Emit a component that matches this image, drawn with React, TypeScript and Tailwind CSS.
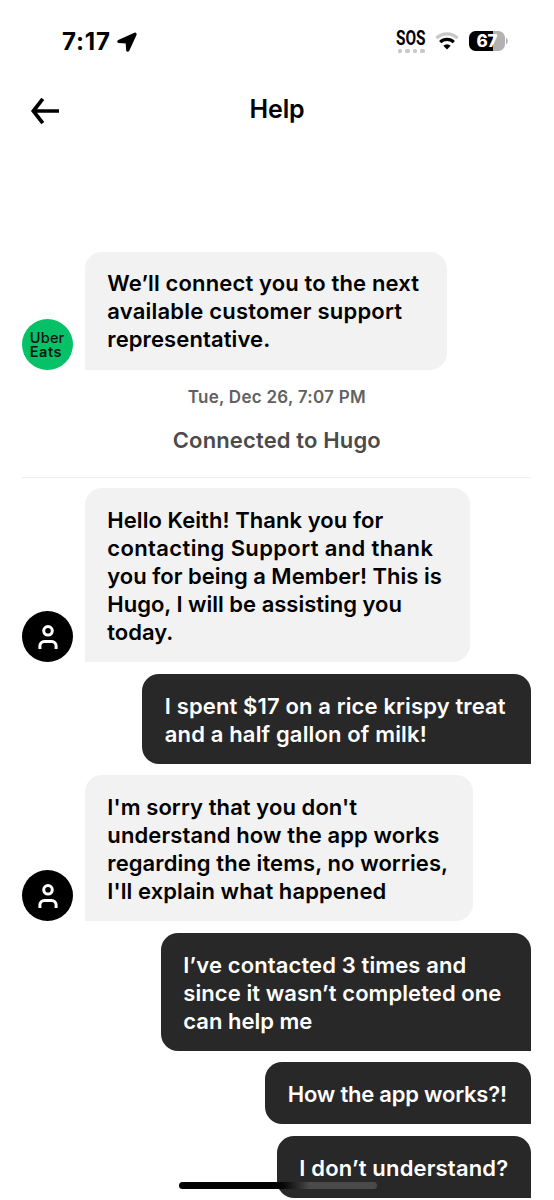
import clsx from 'clsx';

type Line = { text: string; className?: string };
type Message = { from: 'bot' | 'agent' | 'me'; width: string; lines: Line[] };

const intro: Message = {
    from: 'bot',
    width: 'w-[362px]',
    lines: [
        { text: 'We’ll connect you to the next', className: 'tracking-[0.15px]' },
        { text: 'available customer support', className: 'tracking-[0.21px]' },
        { text: 'representative.', className: 'tracking-[0.11px]' }
    ]
};

const messages: Message[] = [
    {
        from: 'agent',
        width: 'w-[385.5px]',
        lines: [
            { text: 'Hello Keith! Thank you for', className: 'tracking-[0.06px]' },
            { text: 'contacting Support and thank', className: 'tracking-[0.37px]' },
            { text: 'you for being a Member! This is' },
            { text: 'Hugo, I will be assisting you' },
            { text: 'today.' }
        ]
    },
    {
        from: 'me',
        width: 'w-[389px]',
        lines: [
            { text: 'I spent $17 on a rice krispy treat', className: 'tracking-[0.13px]' },
            { text: 'and a half gallon of milk!', className: 'tracking-[0.15px]' }
        ]
    },
    {
        from: 'agent',
        width: 'w-[388.5px]',
        lines: [
            { text: "I'm sorry that you don't", className: 'tracking-[0.08px]' },
            { text: 'understand how the app works', className: 'tracking-[0.11px]' },
            { text: 'regarding the items, no worries,', className: 'tracking-[0.09px]' },
            { text: "I'll explain what happened", className: 'tracking-[0.08px]' }
        ]
    },
    {
        from: 'me',
        width: 'w-[370.5px]',
        lines: [
            { text: 'I’ve contacted 3 times and', className: 'tracking-[0.12px]' },
            { text: 'since it wasn’t completed one', className: 'tracking-[0.07px]' },
            { text: 'can help me' }
        ]
    },
    {
        from: 'me',
        width: 'w-[266px]',
        lines: [{ text: 'How the app works?!', className: 'tracking-[-0.22px]' }]
    },
    {
        from: 'me',
        width: 'w-[254.5px]',
        lines: [{ text: 'I don’t understand?', className: 'tracking-[0.17px]' }]
    }
];

const UberEatsAvatar = () => (
    <div className="flex size-[51px] shrink-0 flex-col justify-center rounded-full bg-[#06c167] pl-[7.5px] text-[14.5px] leading-[14px] text-[#06150d]">
        <span className="font-medium tracking-[0.2px]">Uber</span>
        <span className="font-semibold tracking-[0.5px]">Eats</span>
    </div>
);

const AgentAvatar = () => (
    <div className="flex size-[51px] shrink-0 items-center justify-center rounded-full bg-black">
        <svg width="20" height="26" viewBox="0 0 20 26" fill="none" stroke="white" strokeWidth="3">
            <circle cx="10" cy="6.8" r="4.3" />
            <path d="M1.9 25v-3.2a4.4 4.4 0 0 1 4.400-4.400h7.400a4.4 4.4 0 0 1 4.400 4.400V25" />
        </svg>
    </div>
);

const MessageRow = ({ message }: { message: Message }) => {
    const mine = message.from === 'me';
    return (
        <div className={clsx('flex items-end', mine ? 'justify-end' : 'gap-[11.5px]')}>
            {message.from === 'bot' && <UberEatsAvatar />}
            {message.from === 'agent' && <AgentAvatar />}
            <div
                className={clsx(
                    'rounded-[17px] pl-[22.5px] text-[22px] leading-[28px] font-semibold whitespace-nowrap',
                    message.width,
                    message.from === 'bot' ? 'py-[17px]' : 'pt-[18px] pb-[16px]',
                    mine ? 'rounded-br-none bg-[#282828] text-white' : 'rounded-bl-none bg-[#f2f2f2] text-black'
                )}
            >
                {message.lines.map(line => (
                    <p key={line.text} className={line.className}>{line.text}</p>
                ))}
            </div>
        </div>
    );
};

const StatusBar = () => (
    <div className="flex h-[82px] items-center justify-between pr-[46px] pl-[62px]">
        <div className="flex items-center gap-[6px] pt-px">
            <span className="text-[24px] font-bold tracking-[0.8px]">7:17</span>
            <svg width="20" height="20" viewBox="0 0 20 20">
                <path
                    d="M17.700 1.400 1.600 8.800c-.9.4-.8 1.400.2 1.500l7.600.5.500 7.400c.1 1.100 1.200 1.200 1.700.2l7.200-15.600c.4-.9-.2-1.800-1.100-1.400Z"
                    stroke="black"
                    strokeWidth="1.5"
                    strokeLinejoin="round"
                />
            </svg>
        </div>
        <div className="flex items-center">
            <div className="flex w-[30px] flex-col items-center gap-[3px] pt-[3px]">
                <span className="scale-x-[0.79] font-[Roboto] text-[19.5px] leading-[14px] font-bold">SOS</span>
                <div className="flex gap-[3px]">
                    {[0, 1, 2, 3].map(i => (
                        <span key={i} className="size-[4.5px] rounded-[1.5px] bg-[#c8c8c8]" />
                    ))}
                </div>
            </div>
            <svg className="ml-[9px]" width="24" height="18" viewBox="0 0 24 18" fill="none" strokeWidth="3.2">
                <path d="M1.4 6.1a15.4 15.4 0 0 1 21.2 0" stroke="#c8c8c8" />
                <path d="M5.2 10.1a9.8 9.8 0 0 1 13.6 0" stroke="black" />
                <path d="M8.3 13.7a5.3 5.3 0 0 1 7.4 0L12 17.6Z" fill="black" />
            </svg>
            <div className="ml-[10px] flex h-5 w-9 items-center justify-center rounded-[6.5px] bg-linear-to-r from-black from-67% to-[#b2b2b2] to-67% text-[17px] leading-5 font-extrabold text-white">
                67
            </div>
            <svg className="ml-px" width="2" height="8" viewBox="0 0 2 8">
                <path d="M0 0.5C2.4 2 2.4 6 0 7.500Z" fill="#b2b2b2" />
            </svg>
        </div>
    </div>
);

const Header = () => (
    <header className="grid h-[54px] grid-cols-[1fr_auto_1fr] items-center px-[30px]">
        <svg className="mt-[4px]" width="30" height="28" viewBox="0 0 30 28" fill="none" stroke="black" strokeWidth="3.7">
            <path d="M29 14H4M12.800 1.800 3.300 14l9.500 12.200" />
        </svg>
        <h1 className="pt-px text-[25px] font-semibold tracking-[-0.14px]">Help</h1>
    </header>
);

const App = () => {
    return (
        <div className="relative flex h-[1200px] w-[554px] flex-col overflow-hidden bg-white font-[Inter,sans-serif] text-black">
            <StatusBar />
            <Header />

            <main className="flex flex-col pt-[116px] pr-[22.7px] pl-[22.3px]">
                <MessageRow message={intro} />

                {/* Hand-off to the live agent */}
                <div className="flex h-[107.5px] flex-col items-center border-b-[1.5px] border-[#eeeeee] pt-[14px] font-semibold">
                    <p className="text-[17px] leading-[26px] tracking-[0.26px] text-[#616161]">Tue, Dec 26, 7:07 PM</p>
                    <p className="mt-[15px] text-[22px] leading-[30px] tracking-[0.14px] text-[#4b4b4b]">Connected to Hugo</p>
                </div>

                <div className="flex flex-col gap-[11.5px] pt-[10.5px]">
                    {messages.map(message => (
                        <MessageRow key={message.lines[0].text} message={message} />
                    ))}
                </div>
            </main>

            {/* Home indicator, lies over the last bubble */}
            <div className="absolute top-[1181.5px] left-[178.5px] h-[7px] w-[198px] rounded-full bg-linear-to-r from-black from-46% to-[#4a4a4a] to-66%" />
        </div>
    );
};

export default App;
